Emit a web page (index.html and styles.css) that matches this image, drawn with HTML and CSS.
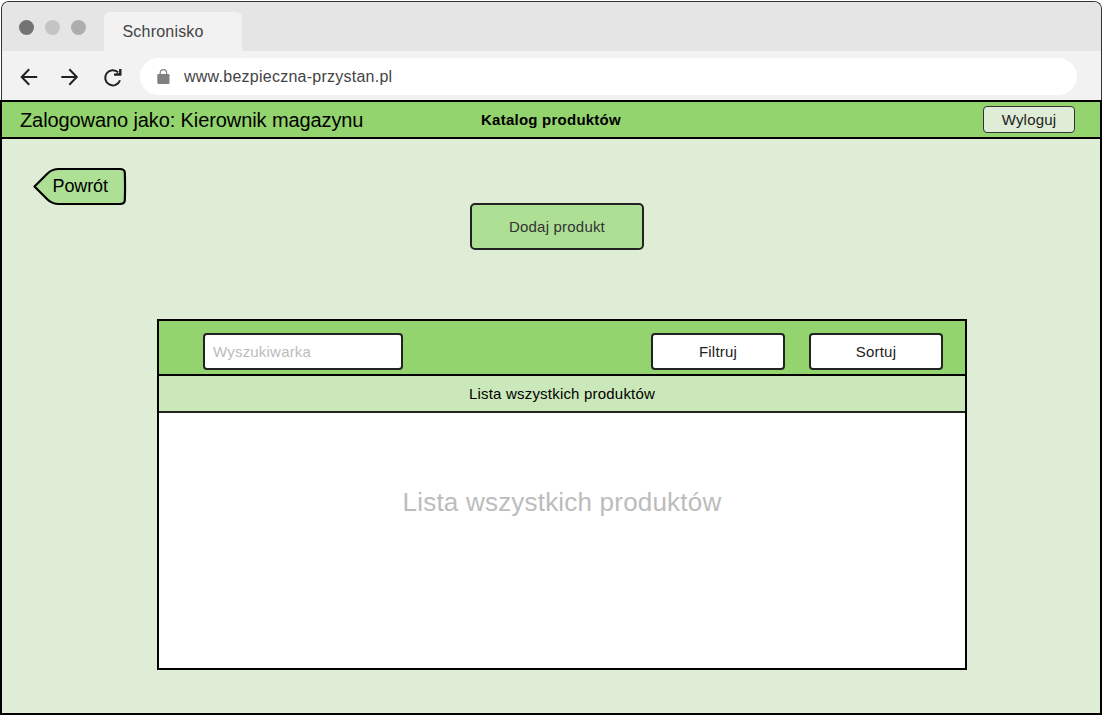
FILE: index.html
```html
<!DOCTYPE html>
<html lang="pl">
<head>
<meta charset="utf-8">
<title>Schronisko</title>
<link rel="stylesheet" href="styles.css">
</head>
<body>
<div class="window">
  <div class="chrome">
    <div class="tabs">
      <div class="dots"><i class="dot dark"></i><i class="dot light"></i><i class="dot mid"></i></div>
      <div class="tab"><span class="t-tab">Schronisko</span></div>
    </div>
    <div class="navbar">
      <svg class="nav-icons" width="110" height="24" viewBox="0 0 110 24" fill="none" stroke="#222" stroke-width="2">
        <path d="M18.200 12H3.200M10.200 4.300L2.700 12l7.500 7.700M42.300 12h15M50.300 4.300L57.800 12l-7.500 7.700"/>
        <path d="M99.200 7.400A7.600 7.600 0 1 0 101 15.200"/>
        <path d="M102.300 4v6.600h-7.200l2.600-2.400h2.600V4z" fill="#222" stroke="none"/>
        <path d="M101.300 4v5.600h-6.300"/>
      </svg>
      <div class="address">
        <svg width="13" height="16" viewBox="0 0 13 16"><rect x="0.300" y="5" width="12.200" height="10" rx="1.300" fill="#808080"/><path d="M3.200 6V3.800a3.200 3.200 0 0 1 6.400 0v2.200" fill="none" stroke="#808080" stroke-width="1.200"/></svg>
        <span class="t-url">www.bezpieczna-przystan.pl</span>
      </div>
    </div>
  </div>
  <div class="app">
    <header class="header">
      <span class="t-user">Zalogowano jako: Kierownik magazynu</span>
      <span class="t-title">Katalog produktów</span>
      <button class="logout"><span class="t-logout">Wyloguj</span></button>
    </header>
    <main class="main">
      <div class="back">
        <svg class="back-shape" width="94" height="39" viewBox="0 0 94 39"><path d="M1.500 19.500L14.500 6.500Q19 2 26 2H87Q91.500 2 91.800 5.500Q92.300 19.500 91.800 33.500Q91.500 37 87 37H26Q19 37 14.500 32.500Z" fill="#addf94" stroke="#000" stroke-width="2.200" stroke-linejoin="round"/></svg>
        <span class="t-back">Powrót</span>
      </div>
      <button class="add"><span class="t-add">Dodaj produkt</span></button>
      <section class="panel">
        <div class="tools">
          <div class="search"><span class="t-search">Wyszukiwarka</span></div>
          <button class="tool"><span class="t-filter">Filtruj</span></button>
          <button class="tool"><span class="t-sort">Sortuj</span></button>
        </div>
        <div class="list-head"><span class="t-head">Lista wszystkich produktów</span></div>
        <div class="list-body"><span class="t-body">Lista wszystkich produktów</span></div>
      </section>
    </main>
  </div>
</div>
</body>
</html>
```
FILE: styles.css
```css
* { box-sizing: border-box; }
body { margin: 0; background: #fff; font-family: "Liberation Sans", Arial, sans-serif; font-size: 15px; letter-spacing: 0.2px; color: #000; overflow: hidden; }
button { font: inherit; letter-spacing: inherit; padding: 0; margin: 0; }
span { white-space: nowrap; }
.window { width: 1102px; height: 715px; display: flex; flex-direction: column; }
.chrome { height: 99px; margin: 1px 0 0 1px; border: 1px solid #333; border-bottom: 0; border-radius: 8px 8px 0 0; background: #f2f2f2; overflow: hidden; }
.tabs { height: 49px; background: #e5e5e5; display: flex; padding-left: 17px; }
.dots { display: flex; gap: 11px; padding-top: 18px; width: 84.500px; }
.dot { width: 15px; height: 15px; border-radius: 50%; }
.dark { background: #737373; }
.light { background: #c4c4c4; }
.mid { background: #adadad; }
.tab { width: 138.500px; margin-top: 10px; background: #f2f2f2; border-radius: 6px 6px 0 0; padding: 11px 0 0 19px; color: #444; line-height: 18px; }
.navbar { display: flex; height: 49px; padding: 7px 0 0 17px; }
.nav-icons { flex: none; margin: 7px 11px 0 0; }
.address { width: 937px; height: 37px; border-radius: 19px; background: #fff; display: flex; align-items: center; padding-left: 17px; gap: 14px; color: #444; }
.app { flex: 1; margin-bottom: 0.500px; border: 2px solid #000; background: #dfecd6; }
.header { height: 37px; background: #93d46f; border-bottom: 2px solid #000; display: flex; align-items: center; padding: 0 25px 0 18px; }
.logout { margin-left: auto; width: 92px; height: 27px; border: 1.500px solid #333; border-radius: 4px; background: #dfecd6; color: #222; padding-bottom: 1px; }
.main { padding: 28px 0 0 31px; display: flex; flex-direction: column; }
.back { width: 94px; height: 39px; display: grid; }
.back > * { grid-area: 1 / 1; }
.add { margin: -3px 0 0 437px; width: 174px; height: 47px; border: 2px solid #222; border-radius: 5px; background: #addf94; color: #333; }
.panel { margin: 69px 0 0 124px; width: 810px; height: 351px; border: 2px solid #000; background: #fff; }
.tools { height: 55px; border-bottom: 2px solid #000; background: #93d46f; display: flex; padding: 12px 22px 0 44px; }
.search, .tool { height: 37px; border: 2px solid #222; border-radius: 4px; background: #fff; }
.search { width: 200px; margin-right: 248px; display: flex; align-items: center; padding-left: 8px; color: #bcbcbc; }
.tool { width: 134px; margin-right: 24px; color: #222; }
.tool:last-child { margin-right: 0; }
.list-head { height: 37px; background: #cbe8ba; border-bottom: 2px solid #222; display: flex; align-items: center; justify-content: center; }
.list-body { display: flex; justify-content: center; padding-top: 74px; color: #bcbcbc; }
.t-tab { font-size: 16px; }
.t-url { font-size: 16px; letter-spacing: 0.250px; }
.t-user { width: 461px; font-size: 20px; letter-spacing: -0.100px; padding-top: 1px; }
.t-title { font-weight: bold; letter-spacing: 0.240px; }
.t-back { font-size: 18px; letter-spacing: -0.100px; padding: 9px 0 0 19.500px; }
.t-body { font-size: 26px; }
```
